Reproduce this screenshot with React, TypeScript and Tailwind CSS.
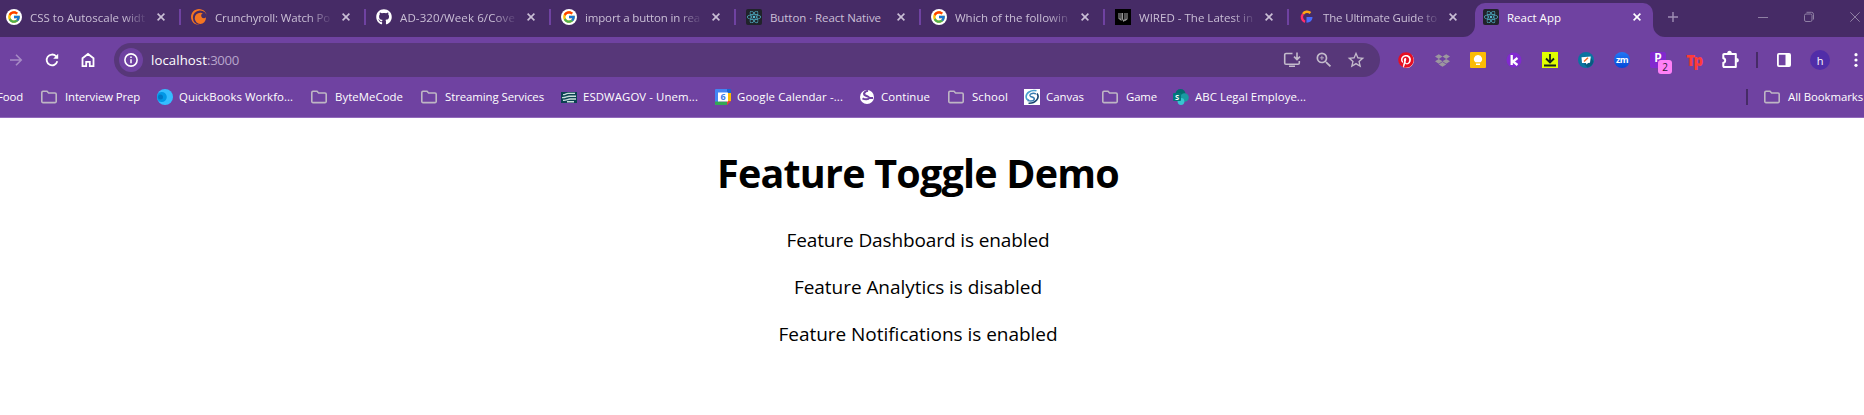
import { useLayoutEffect, useRef } from "react";
import type { ReactNode } from "react";
import { FcGoogle } from "react-icons/fc";
import { SiCrunchyroll } from "react-icons/si";
import { FaGithub, FaReact, FaDropbox, FaPinterest } from "react-icons/fa";
import { MdStarBorder, MdZoomIn } from "react-icons/md";

/* Text whose letter spacing is tuned so that it fills a given width. */
function Fit({ text, width, className = "" }: { text: string; width: number; className?: string }) {
  const ref = useRef<HTMLSpanElement>(null);
  useLayoutEffect(() => {
    const el = ref.current;
    if (!el) return;
    el.style.letterSpacing = "0px";
    const natural = el.getBoundingClientRect().width;
    el.style.letterSpacing = `${(width - natural) / text.length}px`;
  }, [text, width]);
  return (
    <span ref={ref} className={`inline-block shrink-0 whitespace-pre ${className}`}>
      {text}
    </span>
  );
}

const GoogleIcon = () => (
  <span className="flex size-4 items-center justify-center rounded-full bg-white">
    <FcGoogle className="size-[14px]" />
  </span>
);
const CrunchyIcon = () => <SiCrunchyroll className="size-4 text-[#f47521]" />;
const GithubIcon = () => <FaGithub className="size-4 text-white" />;
const ReactIcon = () => (
  <span className="flex size-4 items-center justify-center rounded-[2px] bg-[#20232a]">
    <FaReact className="size-[14px] text-[#53b9d1]" />
  </span>
);
const WiredIcon = () => (
  <svg className="size-4" viewBox="0 0 16 16">
    <rect width="16" height="16" fill="#000" />
    <path d="M4 4v5.5l2 1.500V4M7.500 4v6l1.200 2 1.300-1.500V4M12 4v6l-2 1.500" fill="none" stroke="#999" strokeWidth="1.100" />
  </svg>
);
const GuideIcon = () => (
  <svg className="size-4" viewBox="0 0 16 16" fill="none">
    <path d="M4 5A5 5 0 0 1 11.500 4" stroke="#ffa514" strokeWidth="2.400" />
    <path d="M6 12.800A5 5 0 0 1 4 5" stroke="#ff2d6b" strokeWidth="2.400" />
    <path d="M7.500 8H13.500c0 3.500-2.500 5.700-6 5.700z" fill="#4a6bff" />
  </svg>
);

function Cross({ className }: { className: string }) {
  return (
    <svg className={`size-2 shrink-0 ${className}`} viewBox="0 0 8 8" stroke="currentColor" strokeWidth="1.600">
      <path d="M.6.600l6.800 6.800M7.400.600L.6 7.400" />
    </svg>
  );
}

type Tab = { icon: ReactNode; title: string; fit: number; box: string };
const tabs: Tab[] = [
  { icon: <GoogleIcon />, title: "CSS to Autoscale widt", fit: 115, box: "w-[181px] pl-1.5" },
  { icon: <CrunchyIcon />, title: "Crunchyroll: Watch Po", fit: 115, box: "w-[185px] pl-2.5" },
  { icon: <GithubIcon />, title: "AD-320/Week 6/Cove", fit: 115, box: "w-[185px] pl-2.5" },
  { icon: <GoogleIcon />, title: "import a button in rea", fit: 115, box: "w-[185px] pl-2.5" },
  { icon: <ReactIcon />, title: "Button · React Native", fit: 111, box: "w-[185px] pl-2.5" },
  { icon: <GoogleIcon />, title: "Which of the followin", fit: 113, box: "w-[184px] pl-2.5" },
  { icon: <WiredIcon />, title: "WIRED - The Latest in", fit: 114, box: "w-[184px] pl-2.5" },
  { icon: <GuideIcon />, title: "The Ultimate Guide to", fit: 114, box: "w-[186px] pl-2.5" },
];

function TabStrip() {
  return (
    <div className="flex h-[37px] bg-[#462b66] text-[11.500px] text-[#cabfd6]">
      {tabs.map((t, i) => (
        <div key={i} className={`flex h-[34px] shrink-0 items-center ${t.box}`}>
          <span className="shrink-0">{t.icon}</span>
          <span className={`ml-2 flex w-[115px] shrink-0 pt-px leading-5 ${t.fit > 111 ? "[mask-image:linear-gradient(to_right,#000_93px,transparent_118px)]" : ""}`}>
            <Fit text={t.title} width={t.fit} />
          </span>
          <Cross className={i > 4 ? "ml-[11px]" : "ml-3"} />
          {i < tabs.length - 1 && <span className="ml-auto h-4 w-0.5 bg-[#6f42a1]" />}
        </div>
      ))}
      <div className="relative mt-[3px] flex h-[34px] w-[178px] shrink-0 items-center rounded-t-[10px] bg-[#6f42a1] pb-[6px] pl-2 text-white">
        <svg className="absolute bottom-0 left-[-12px] h-3 w-[202px]" viewBox="0 0 202 12" fill="#6f42a1">
          <path d="M0 12A12 12 0 0 0 12 0V12zM202 12A12 12 0 0 1 190 0V12z" />
        </svg>
        <ReactIcon />
        <span className="ml-2 pt-0.5 leading-5">
          <Fit text="React App" width={54} />
        </span>
        <Cross className="ml-auto mr-3" />
      </div>
      <svg className="ml-[15px] mt-3 size-[10px] shrink-0" viewBox="0 0 10 10" stroke="#a08fb5" strokeWidth="1.400">
        <path d="M5 0v10M0 5h10" />
      </svg>
      <svg className="ml-20 mt-3 size-[10px] shrink-0" viewBox="0 0 10 10" stroke="#8f80a4">
        <path d="M0 5.500h10" />
      </svg>
      <svg className="ml-9 mt-3 size-[10px] shrink-0 overflow-visible" viewBox="0 0 10 10" stroke="#8f80a4" fill="none">
        <rect x=".5" y="2" width="7.500" height="7.500" rx="1.500" />
        <path d="M2.500.3H7.500A2 2 0 0 1 9.500 2.300V7.500" />
      </svg>
      <svg className="ml-9 mt-3 size-[10px] shrink-0" viewBox="0 0 10 10" stroke="#8f80a4">
        <path d="M.3.300l9.400 9.400M9.700.300L.3 9.700" />
      </svg>
    </div>
  );
}

function Puzzle() {
  return (
    <svg className="size-5" viewBox="0 0 20 20" fill="none">
      <path
        d="M4.200 4H15.800V17H4.200a.9.900 0 0 1-.9-.9V12.800C5.800 12.500 5.800 8.500 3.300 8.200V4.900A.9.900 0 0 1 4.200 4z"
        stroke="#fff"
        strokeWidth="2"
        strokeLinejoin="round"
      />
      <path d="M7.200 3.500a2.300 2.800 0 0 1 4.600 0zM16.300 8a2.600 2.300 0 0 1 0 4.600z" fill="#fff" />
    </svg>
  );
}

const extensions: ReactNode[] = [
  <span className="flex size-[15px] items-center justify-center rounded-full bg-white">
    <FaPinterest className="size-4 shrink-0 text-[#e60e23]" />
  </span>,
  <FaDropbox className="size-[15px] text-[#9c979f]" />,
  <svg className="size-4" viewBox="0 0 16 16">
    <rect width="16" height="16" rx="1" fill="#fbbc04" />
    <path d="M8 3a4 4 0 0 0-2.500 7.200h5A4 4 0 0 0 8 3zM6 11.500h4V13H6z" fill="#fff" />
  </svg>,
  <svg className="size-4" viewBox="0 0 16 16">
    <circle cx="8" cy="8" r="7.500" fill="#8129d0" />
    <path d="M5.700 3v10M11.500 6L7 9.500l4.500 3.500" fill="none" stroke="#fff" strokeWidth="2.300" />
  </svg>,
  <svg className="size-4" viewBox="0 0 16 16">
    <rect width="16" height="16" fill="#e1ff00" />
    <path d="M8 2v8M4 6.500L8 10.500l4-4M2 13.500h12" fill="none" stroke="#17251b" strokeWidth="1.800" />
  </svg>,
  <svg className="size-4" viewBox="0 0 16 16">
    <circle cx="8" cy="8" r="8" fill="#0b73a0" />
    <path d="M8 11l5-5 2.500 3.500a8 8 0 0 1-6 6L6 12z" fill="#075a80" />
    <path d="M3.500 5.200l9.300-.7-.8 6.200-2 .2-1.500 1.500-.5-1.500H4z" fill="#fff" />
    <path d="M6 9.500l4-3.800" stroke="#ef6a24" strokeWidth="1.500" />
  </svg>,
  <span className="flex size-4 items-center justify-center rounded-full bg-linear-to-b from-[#2277f5] to-[#0648d8] pb-0.5 text-[9px] leading-none font-bold tracking-[-0.6px] text-white">
    zm
  </span>,
  <span className="relative flex size-4 justify-center rounded-[2px] bg-[#8129cf] font-['Liberation_Mono',monospace] text-[12px] leading-[14px] font-bold text-white">
    P
    <span className="absolute top-2 left-2 flex h-[14px] w-[14px] items-center justify-center rounded-[3px] bg-[#ff80f7] font-['Open_Sans',sans-serif] text-[10px] leading-none font-normal text-[#2c1835]">
      2
    </span>
  </span>,
  <span className="text-[15px] leading-4 font-extrabold tracking-[-1.500px] text-[#ff3b38]">Tp</span>,
  <Puzzle />,
];

function Toolbar() {
  return (
    <div className="flex h-[46px] items-center bg-[#6f42a1]">
      <svg className="ml-[9px] size-[14px] shrink-0" viewBox="0 0 14 14" fill="none" stroke="#a78bc5" strokeWidth="1.600">
        <path d="M1 7h11M7 1.800L12.200 7 7 12.200" />
      </svg>
      <svg className="ml-[22px] size-[14px] shrink-0" viewBox="0 0 14 14" fill="none" stroke="#fff" strokeWidth="1.800">
        <path d="M12.300 8.300A5.400 5.400 0 1 1 11 3.200L12.500 4.700" />
        <path d="M13.200.800V5.800H8.200z" fill="#fff" stroke="none" />
      </svg>
      <svg className="ml-[22px] size-[14px] shrink-0 overflow-visible" viewBox="0 0 14 14" fill="none" stroke="#fff" strokeWidth="1.800">
        <path d="M1.500 5.300L7 1l5.500 4.300V13.200H8.800V8.800H5.200v4.400H1.500z" />
      </svg>
      <div className="ml-[19px] flex h-[34px] w-[1266px] shrink-0 items-center rounded-full bg-[#573779] pl-[5px]">
        <span className="flex size-6 items-center justify-center rounded-full bg-[#6f42a1]">
          <svg className="size-[14px]" viewBox="0 0 14 14" fill="none" stroke="#fff">
            <circle cx="7" cy="7" r="6.100" strokeWidth="1.600" />
            <path d="M7 6.200V10.200M7 3.600V5.100" strokeWidth="1.500" />
          </svg>
        </span>
        <span className="ml-2 flex text-[13.200px] leading-5 text-white">
          <Fit text="localhost" width={56} />
          <Fit text=":3000" width={32} className="text-[#b8a5cc]" />
        </span>
        <svg className="ml-auto size-[18px]" viewBox="0 0 18 18" fill="none" stroke="#c3bbcb" strokeWidth="1.600">
          <path d="M9.500 2.500H3a1.300 1.300 0 0 0-1.300 1.300V12A1.300 1.300 0 0 0 3 13.300H15A1.300 1.300 0 0 0 16.300 12V10M14 1.500V8.500M11 5.600L14 8.600l3-3M6 15.200h6" />
        </svg>
        <MdZoomIn className="ml-[13px] size-5 text-[#c3bbcb]" />
        <MdStarBorder className="ml-3 mr-[14px] size-5 text-[#c3bbcb]" />
      </div>
      <div className="ml-2 flex">
        {extensions.map((e, i) => (
          <span key={i} className="flex h-6 w-9 items-center justify-center">
            {e}
          </span>
        ))}
      </div>
      <span className="ml-2 h-4 w-0.5 shrink-0 bg-[#462b66]" />
      <svg className="ml-[19px] size-[14px] shrink-0" viewBox="0 0 14 14">
        <rect x=".9" y=".9" width="12.200" height="12.200" rx="1" fill="none" stroke="#fff" strokeWidth="1.800" />
        <path d="M8.500 1H13v12H8.500z" fill="#fff" />
      </svg>
      <span className="ml-[19px] flex size-5 shrink-0 items-center justify-center rounded-full bg-[#512da8] text-[11px] leading-none text-white">
        h
      </span>
      <svg className="ml-6 h-[14px] w-1 shrink-0" viewBox="0 0 4 14" fill="#fff">
        <circle cx="2" cy="1.700" r="1.600" />
        <circle cx="2" cy="7" r="1.600" />
        <circle cx="2" cy="12.300" r="1.600" />
      </svg>
    </div>
  );
}

const Folder = () => (
  <svg className="h-[14px] w-4 shrink-0" viewBox="0 0 16 14" fill="none" stroke="#beb6c4" strokeWidth="1.600">
    <path d="M2 1.200H6L7.600 3H14a1.200 1.200 0 0 1 1.200 1.200V11.400A1.200 1.200 0 0 1 14 12.600H2A1.200 1.200 0 0 1 .8 11.400V2.400A1.200 1.200 0 0 1 2 1.200z" />
  </svg>
);
const QuickBooks = () => (
  <svg className="size-4" viewBox="0 0 16 16">
    <circle cx="8" cy="8" r="8" fill="#35bdff" />
    <path d="M.8 5a5 5 0 1 1 0 6 8 8 0 0 1 0-6z" fill="#0097e6" />
    <circle cx="3.500" cy="8" r="2.500" fill="#0077c5" />
  </svg>
);
const Esd = () => (
  <svg className="h-[11px] w-4" viewBox="0 0 16 11">
    <rect width="16" height="11" fill="#0c4353" />
    <path
      d="M2 2.600C4 2.800 5 1.400 7 1.400H14M1 5.600C4 5.900 6 4.300 8 4.200H15M2 8.300C5 8.600 7 7.100 9 7H15M6 9.800H13"
      stroke="#c9dfdc"
      strokeWidth="1.400"
      fill="none"
    />
  </svg>
);
const Calendar = () => (
  <svg className="size-4" viewBox="0 0 16 16">
    <path d="M0 1a1 1 0 0 1 1-1H12V4H4v12H1a1 1 0 0 1-1-1z" fill="#4285f4" />
    <path d="M12 0h3a1 1 0 0 1 1 1v3h-4z" fill="#1967d2" />
    <path d="M12 4h4v8h-4z" fill="#fbbc04" />
    <path d="M0 12.500h12V16H1a1 1 0 0 1-1-1z" fill="#34a853" />
    <path d="M12 12h4l-4 4z" fill="#ea4335" />
    <path d="M3 3.500h10v9H3z" fill="#fff" />
    <text x="8" y="11.300" fontSize="9" fontWeight="700" textAnchor="middle" fill="#3b7de9">6</text>
  </svg>
);
const Continue = () => (
  <svg className="size-[14px]" viewBox="0 0 14 14">
    <circle cx="7" cy="7" r="7" fill="#fff" />
    <path d="M8 .8C4 1.500 3 4.300 5.500 5.500 7.500 6.300 9.300 6.500 9 8 8.500 9.500 5 9.800 2.500 8.300M8.500 8H13" fill="none" stroke="#6f42a1" strokeWidth="2.100" />
  </svg>
);
const Canvas = () => (
  <svg className="size-4" viewBox="0 0 16 16" fill="none">
    <rect width="16" height="16" fill="#fff" />
    <path d="M12.500 1.800C7 .5 1.500 4 2.200 8.500c.3 1.800 1.600 2.600 3 2.500" stroke="#4aa0cf" strokeWidth="1.600" />
    <path d="M12 4.800C8 3.300 4.500 5.800 6.500 7.300c1.500 1 4.300.8 3.800 3-.4 1.500-3.300 2-6.800 1.300" stroke="#3a7cb0" strokeWidth="1.400" />
    <path d="M13 4.500c3 4-1 10-8.500 9.700" stroke="#17446f" strokeWidth="1.600" />
  </svg>
);
const SharePoint = () => (
  <svg className="size-4" viewBox="0 0 16 16">
    <circle cx="7.500" cy="5" r="5" fill="#036c70" />
    <circle cx="11.500" cy="8.500" r="4.300" fill="#1a9ba1" />
    <circle cx="8" cy="12.500" r="3.400" fill="#37c6d0" />
    <rect y="4" width="8" height="8" rx="1" fill="#03787c" />
    <text x="4" y="10.500" fontSize="7.500" fontWeight="700" textAnchor="middle" fill="#fff">S</text>
  </svg>
);

/* gap: space before the icon; pad: space between icon and label */
const bookmarks: { icon: ReactNode; text: string; fit: number; gap: string; pad: string }[] = [
  { icon: <Folder />, text: "Interview Prep", fit: 75, gap: "ml-[18px]", pad: "ml-2" },
  { icon: <QuickBooks />, text: "QuickBooks Workfo...", fit: 114, gap: "ml-[17px]", pad: "ml-1.5" },
  { icon: <Folder />, text: "ByteMeCode", fit: 68, gap: "ml-[18px]", pad: "ml-2" },
  { icon: <Folder />, text: "Streaming Services", fit: 99, gap: "ml-[18px]", pad: "ml-2" },
  { icon: <Esd />, text: "ESDWAGOV - Unem...", fit: 115, gap: "ml-[17px]", pad: "ml-1.5" },
  { icon: <Calendar />, text: "Google Calendar -...", fit: 106, gap: "ml-[17px]", pad: "ml-1.5" },
  { icon: <Continue />, text: "Continue", fit: 49, gap: "ml-[17px]", pad: "ml-[7px]" },
  { icon: <Folder />, text: "School", fit: 36, gap: "ml-[18px]", pad: "ml-2" },
  { icon: <Canvas />, text: "Canvas", fit: 38, gap: "ml-4", pad: "ml-1.5" },
  { icon: <Folder />, text: "Game", fit: 31, gap: "ml-[18px]", pad: "ml-2" },
  { icon: <SharePoint />, text: "ABC Legal Employe...", fit: 111, gap: "ml-4", pad: "ml-1.5" },
];

function BookmarkBar() {
  return (
    <div className="flex h-[35px] items-start border-b border-[#9169bb] bg-[#6f42a1] pt-1 text-[11.400px] leading-5 text-white">
      <Fit text="Food" width={26} className="-ml-[3px]" />
      {bookmarks.map((b, i) => (
        <div key={i} className={`flex shrink-0 items-center ${b.gap}`}>
          <span className="shrink-0">{b.icon}</span>
          <span className={`flex ${b.pad}`}>
            <Fit text={b.text} width={b.fit} />
          </span>
        </div>
      ))}
      <span className="mt-0.5 ml-auto h-4 w-0.5 shrink-0 bg-[#462b66]" />
      <div className="ml-4 flex shrink-0 items-center">
        <Folder />
        <span className="ml-2 flex w-[76px]">
          <Fit text="All Bookmarks" width={75} />
        </span>
      </div>
    </div>
  );
}

export default function App() {
  return (
    <div className="h-[415px] w-[1864px] overflow-hidden bg-white font-['Open_Sans','Noto_Sans',sans-serif]">
      <TabStrip />
      <Toolbar />
      <BookmarkBar />
      <main className="mr-7 flex flex-col items-center text-[19px] text-black">
        <h1 className="mt-[28px] text-[39.500px] leading-[54px] font-bold">
          <Fit text="Feature Toggle Demo" width={402} />
        </h1>
        <p className="mt-[27px] leading-[27px]">
          <Fit text="Feature Dashboard is enabled" width={263} />
        </p>
        <p className="mt-5 leading-[27px]">
          <Fit text="Feature Analytics is disabled" width={248} />
        </p>
        <p className="mt-5 leading-[27px]">
          <Fit text="Feature Notifications is enabled" width={279} />
        </p>
      </main>
    </div>
  );
}
